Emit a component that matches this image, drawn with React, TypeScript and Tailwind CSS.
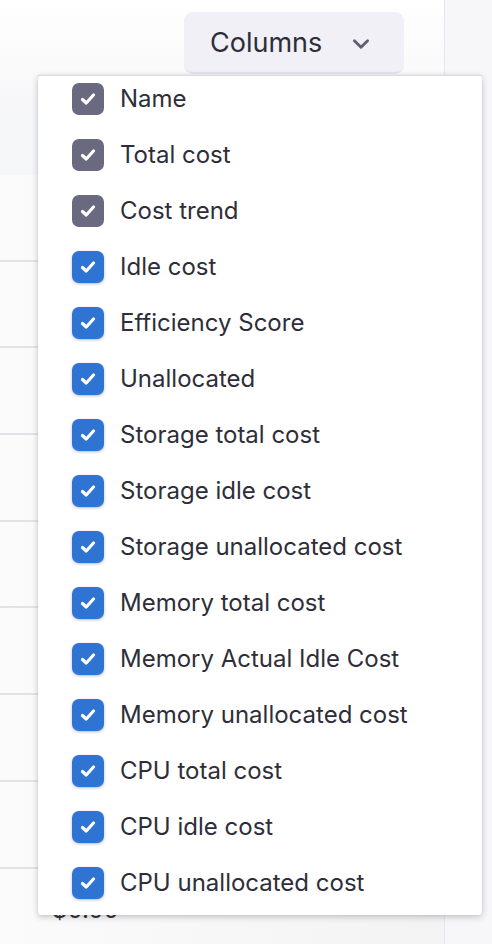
import React from "react";

const items: { label: string; locked: boolean }[] = [
  { label: "Name", locked: true },
  { label: "Total cost", locked: true },
  { label: "Cost trend", locked: true },
  { label: "Idle cost", locked: false },
  { label: "Efficiency Score", locked: false },
  { label: "Unallocated", locked: false },
  { label: "Storage total cost", locked: false },
  { label: "Storage idle cost", locked: false },
  { label: "Storage unallocated cost", locked: false },
  { label: "Memory total cost", locked: false },
  { label: "Memory Actual Idle Cost", locked: false },
  { label: "Memory unallocated cost", locked: false },
  { label: "CPU total cost", locked: false },
  { label: "CPU idle cost", locked: false },
  { label: "CPU unallocated cost", locked: false },
];

function Check() {
  return (
    <svg width="20" height="20" viewBox="0 0 20 20" fill="none">
      <path d="M4.5 10.5 L8.2 14 L15.5 6" stroke="white" strokeWidth="3.2" strokeLinecap="round" strokeLinejoin="round" />
    </svg>
  );
}

export default function App() {
  const rows = [0, 1, 2, 3, 4, 5, 6, 7, 8];
  return (
    <div
      className="relative w-[492px] h-[944px] overflow-hidden bg-white flex"
      style={{ fontFamily: "Inter, 'Noto Sans', sans-serif" }}
    >
      <div className="w-[445px] h-full border-r border-[#e6e7ee] flex flex-col bg-white">
        <div className="h-[107px] shrink-0 flex justify-end pr-[40px] pt-[12px] bg-gradient-to-b from-white to-[#f7f7f9]">
          <button className="w-[220px] h-[62px] rounded-[9px] bg-[#f0f0f6] border-b-2 border-[#e4e4ec] flex items-center pl-[26px] pt-[3px] text-[27px] text-[#2e2e3a]">
            <span>Columns</span>
            <svg className="ml-[28px]" width="22" height="22" viewBox="0 0 20 20" fill="none">
              <path d="M4 7 L10 13 L16 7" stroke="#5f6075" strokeWidth="2.6" strokeLinecap="round" strokeLinejoin="round" />
            </svg>
          </button>
        </div>
        <div className="h-[68px] shrink-0 bg-gradient-to-r from-[#f6f7f9] to-[#eef0f3]" />
        {rows.map((r) => (
          <div
            key={r}
            className="h-[86.7px] shrink-0 border-b-2 border-[#e2e3ea] bg-gradient-to-r from-[#fbfbfb] to-[#f3f3f4] flex items-center pl-[52px]"
          >
            {r === 8 ? <span className="text-[24px] text-[#2e2e3a] -mt-[2px]">$0.00</span> : null}
          </div>
        ))}
      </div>
      <div className="flex-1 h-full bg-[#f7f7fa]" />

      <div className="absolute left-[38px] top-[75px] w-[444px] h-[840px] bg-white rounded-[2px] border-t border-[#dcdce4] shadow-[0_2px_6px_rgba(40,40,60,0.25),0_0_1px_rgba(40,40,60,0.3)] overflow-hidden">
        <div className="-mt-[5px] flex flex-col">
          {items.map((it) => (
            <div key={it.label} className="h-[56px] shrink-0 flex items-center pl-[34px]">
              <div
                className={
                  it.locked
                    ? "w-[32px] h-[32px] rounded-[7px] bg-[#696a80] flex items-center justify-center"
                    : "w-[32px] h-[32px] rounded-[7px] bg-[#2f73d3] shadow-[0_1px_3px_rgba(30,60,120,0.35)] flex items-center justify-center"
                }
              >
                <Check />
              </div>
              <span className="ml-[16px] text-[24px] text-[#2e2e3a]">{it.label}</span>
            </div>
          ))}
        </div>
      </div>
    </div>
  );
}
